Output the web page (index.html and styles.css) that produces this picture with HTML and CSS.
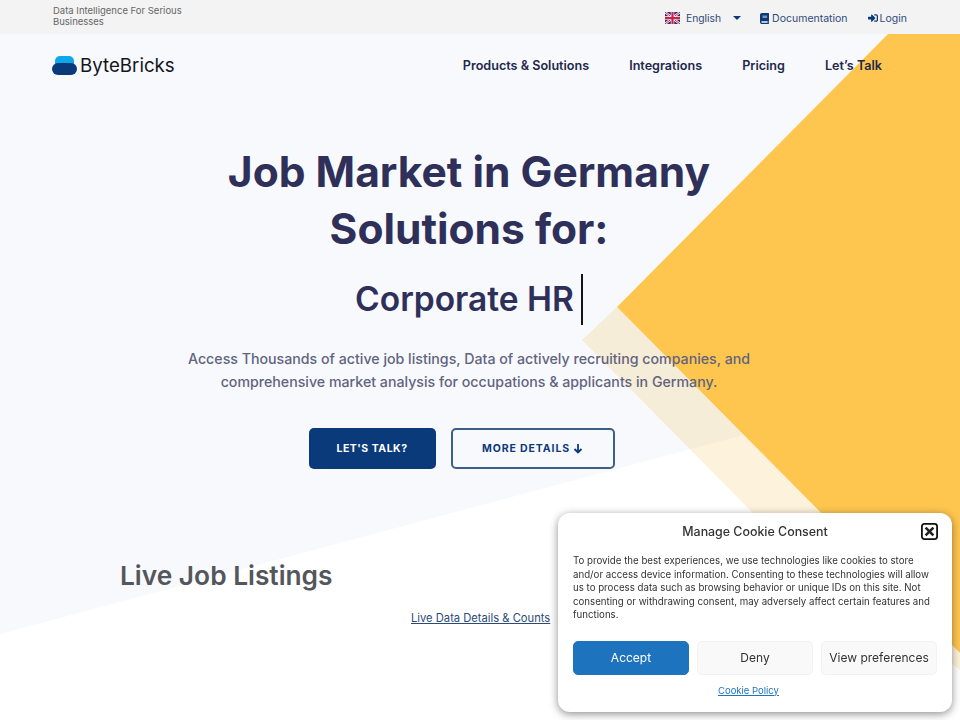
FILE: index.html
```html
<!DOCTYPE html>
<html lang="en">
<head>
  <meta charset="UTF-8" />
  <meta name="viewport" content="width=device-width, initial-scale=1.0"/>
  <title>ByteBricks</title>
  <link rel="stylesheet" href="styles.css">
</head>
<body>

  <!-- Top strip -->
  <div class="topbar">
    <div class="tagline">Data Intelligence For Serious Businesses</div>
    <div class="top-links">
      <a class="lang" href="#">
        <svg class="flag" viewBox="0 0 60 48" width="15" height="12" aria-hidden="true">
          <rect width="60" height="48" fill="#2a2d72"/>
          <path d="M0 0L60 48M60 0L0 48" stroke="#fff" stroke-width="9"/>
          <path d="M0 0L60 48M60 0L0 48" stroke="#c8234a" stroke-width="4"/>
          <path d="M30 0V48M0 24H60" stroke="#fff" stroke-width="14"/>
          <path d="M30 0V48M0 24H60" stroke="#c8234a" stroke-width="9"/>
        </svg>
        English
        <span class="caret"></span>
      </a>
      <a href="#">
        <svg viewBox="0 0 448 512" width="9" height="11" preserveAspectRatio="none" aria-hidden="true"><path fill="#0b3a7a" d="M448 360V24c0-13-11-24-24-24H96C43 0 0 43 0 96v320c0 53 43 96 96 96h328c13 0 24-11 24-24v-16c0-8-3-14-9-19-4-15-4-59 0-73 6-5 9-12 9-20zM128 134c0-3 3-6 6-6h212c3 0 6 3 6 6v20c0 3-3 6-6 6H134c-3 0-6-3-6-6v-20zm0 64c0-3 3-6 6-6h212c3 0 6 3 6 6v20c0 3-3 6-6 6H134c-3 0-6-3-6-6v-20zm253 250H96c-18 0-32-14-32-32 0-17 14-32 32-32h285c-2 17-2 47 0 64z"/></svg>
        Documentation
      </a>
      <a class="login" href="#">
        <svg viewBox="0 0 512 512" width="10" height="10" aria-hidden="true"><path fill="#0b3a7a" d="M416 448h-84c-7 0-12-5-12-12v-40c0-7 5-12 12-12h84c18 0 32-14 32-32V160c0-18-14-32-32-32h-84c-7 0-12-5-12-12V76c0-7 5-12 12-12h84c53 0 96 43 96 96v192c0 53-43 96-96 96zm-47-201L201 79c-15-15-41-5-41 17v96H24c-13 0-24 11-24 24v96c0 13 11 24 24 24h136v96c0 22 26 32 41 17l168-168c9-10 9-24 0-34z"/></svg>
        Login
      </a>
    </div>
  </div>

  <main class="page">
    <!-- Background shapes -->
    <svg class="bg-shapes" viewBox="0 0 960 686" preserveAspectRatio="none" aria-hidden="true">
      <polygon points="0,600 960,343 960,686 0,686" fill="#fff"/>
      <polygon points="617,273 582,306 752,478 960,636 960,619" fill="#f6c65a" fill-opacity="0.22"/>
      <polygon points="888,0 960,0 960,619 617,273" fill="#fec64f"/>
    </svg>

    <header class="nav">
      <a class="logo" href="#">
        <svg viewBox="0 0 25 19" width="25" height="19" aria-hidden="true">
          <rect x="3" y="0" width="19" height="12" rx="5" fill="#0fa6ea"/>
          <rect x="0" y="7" width="25" height="12" rx="6" fill="#0b3a7a"/>
        </svg>
        <span>ByteBricks</span>
      </a>
      <nav class="menu">
        <a href="#">Products &amp; Solutions</a>
        <a href="#">Integrations</a>
        <a href="#">Pricing</a>
        <a href="#">Let’s Talk</a>
      </nav>
    </header>

    <section class="hero">
      <h1>Job Market in Germany<br>Solutions for:</h1>
      <div class="typed"><span>Corporate HR</span><i class="cursor"></i></div>
      <p class="lead">Access Thousands of active job listings, Data of actively recruiting companies, and comprehensive market analysis for occupations &amp; applicants in Germany.</p>
      <div class="actions">
        <a class="btn btn-fill" href="#">LET'S TALK?</a>
        <a class="btn btn-line" href="#">MORE DETAILS
          <svg viewBox="0 0 10 11" width="10" height="11" aria-hidden="true"><path d="M5 1v8.5M1.5 6L5 9.5 8.5 6" fill="none" stroke="#0b3a7a" stroke-width="1.8"/></svg>
        </a>
      </div>
    </section>

    <section class="listings">
      <h2>Live Job Listings</h2>
      <a class="details-link" href="#">Live Data Details &amp; Counts</a>
    </section>
  </main>

  <!-- Cookie popup -->
  <div class="cookie" role="dialog" aria-labelledby="cookieTitle">
    <div class="cookie-head">
      <div id="cookieTitle" class="cookie-title">Manage Cookie Consent</div>
      <button class="cookie-close" type="button" aria-label="Close">
        <svg viewBox="0 0 17 17" width="17" height="17" aria-hidden="true">
          <rect x="0.9" y="0.9" width="15.2" height="15.2" rx="2.5" fill="#fff" stroke="#111" stroke-width="1.8"/>
          <path d="M4.6 4.6l7.8 7.8M12.4 4.6l-7.8 7.8" stroke="#222" stroke-width="2.6"/>
        </svg>
      </button>
    </div>
    <p class="cookie-text">To provide the best experiences, we use technologies like cookies to store and/or access device information. Consenting to these technologies will allow us to process data such as browsing behavior or unique IDs on this site. Not consenting or withdrawing consent, may adversely affect certain features and functions.</p>
    <div class="cookie-btns">
      <button class="accept" type="button">Accept</button>
      <button type="button">Deny</button>
      <button type="button">View preferences</button>
    </div>
    <a class="cookie-policy" href="#">Cookie Policy</a>
  </div>

</body>
</html>
```

FILE: styles.css
```css
/* Base & Layout */
html, body {
  height: 100%;
}
body {
  margin: 0;
  font-family: Inter, "Noto Sans", sans-serif;
  background-color: #fff;
  overflow: hidden;
}
a {
  text-decoration: none;
  color: inherit;
}

/* Top strip */
.topbar {
  height: 34px;
  box-sizing: border-box;
  padding: 0 53px;
  background: #f3f3f3;
  display: flex;
  align-items: center;
  justify-content: space-between;
}
.tagline {
  width: 135px;
  padding-bottom: 2px;
  font-size: 9.5px;
  line-height: 11px;
  color: #666;
}
.top-links {
  display: flex;
  align-items: center;
  gap: 20px;
  padding-top: 2px;
  font-size: 10.5px;
  color: #2f4a78;
}
.top-links a {
  display: flex;
  align-items: center;
  gap: 3px;
}
.top-links .lang {
  gap: 6px;
  margin-right: -1px;
  font-size: 10.3px;
}
.top-links .login {
  gap: 2px;
}
.caret {
  margin-left: 6px;
  border: 4px solid transparent;
  border-top-color: #0b3a7a;
  border-bottom: 0;
}

/* Page background */
.page {
  position: relative;
  height: 686px;
  background: #f7f9fd;
}
.bg-shapes {
  position: absolute;
  inset: 0;
  width: 100%;
  height: 100%;
}

/* Nav */
.nav {
  position: relative;
  display: flex;
  align-items: center;
  justify-content: space-between;
  height: 62px;
  padding: 0 78px 0 52px;
}
.logo {
  display: flex;
  align-items: center;
  gap: 3px;
  font-size: 18.7px;
  color: #14141c;
}
.menu {
  display: flex;
  gap: 40px;
  font-size: 12.6px;
  font-weight: 600;
  color: #22284a;
}

/* Hero */
.hero {
  position: relative;
  text-align: center;
  padding-right: 22px;
}
h1 {
  margin: 47px 0 0;
  font-size: 42.5px;
  line-height: 57px;
  font-weight: 700;
  color: #2f3059;
}
.typed {
  margin-top: 16px;
  height: 52px;
  display: flex;
  align-items: center;
  justify-content: center;
  gap: 7px;
  font-size: 33.5px;
  font-weight: 600;
  color: #2f3059;
}
.cursor {
  width: 2px;
  height: 51px;
  background: #14141c;
}
.lead {
  width: 580px;
  margin: 22px auto 0;
  font-size: 14.2px;
  line-height: 23px;
  font-weight: 500;
  color: #62647f;
}
.actions {
  margin-top: 35px;
  padding-right: 15px;
  display: flex;
  justify-content: center;
  gap: 15px;
}
.btn {
  box-sizing: border-box;
  height: 41px;
  border-radius: 5px;
  display: flex;
  align-items: center;
  justify-content: center;
  gap: 3px;
  font-size: 10.5px;
  font-weight: 700;
  letter-spacing: 0.9px;
}
.btn-fill {
  width: 127px;
  background: #0b3a7a;
  color: #fff;
  letter-spacing: 0.5px;
}
.btn-line {
  width: 164px;
  border: 2px solid #3c5f88;
  color: #0b3a7a;
}

/* Listings */
.listings {
  position: relative;
  padding-left: 120px;
}
h2 {
  margin: 89px 0 0;
  font-size: 26.3px;
  line-height: 36px;
  font-weight: 600;
  color: #54565b;
}
.details-link {
  display: block;
  width: 139px;
  margin: 16px 0 0 291px;
  font-size: 11.2px;
  line-height: 16px;
  color: #2c4a78;
  text-decoration: underline;
  white-space: nowrap;
}

/* Cookie popup */
.cookie {
  position: fixed;
  left: 558px;
  top: 513px;
  width: 394px;
  height: 199px;
  box-sizing: border-box;
  padding: 0 15px;
  background: #fff;
  border-radius: 12px;
  box-shadow: 0 2px 8px rgba(0,0,0,0.45);
  color: #333;
}
.cookie-head {
  position: relative;
  height: 37px;
  display: flex;
  align-items: center;
  justify-content: center;
}
.cookie-title {
  font-size: 12.4px;
  font-weight: 500;
}
.cookie-close {
  position: absolute;
  right: -1px;
  top: 10px;
  width: 17px;
  height: 17px;
  padding: 0;
  border: 0;
  background: none;
}
.cookie-text {
  margin: 4px 0 0;
  font-size: 9.7px;
  line-height: 13.5px;
}
.cookie-btns {
  margin-top: 19px;
  display: grid;
  grid-template-columns: repeat(3, 1fr);
  gap: 8px;
}
.cookie-btns button {
  height: 34px;
  padding: 0;
  border: 1px solid #f2f2f2;
  border-radius: 5px;
  background: #f9f9f9;
  font-family: inherit;
  font-size: 12px;
  color: #333;
}
.cookie-btns .accept {
  background: #1e73be;
  border-color: #1e73be;
  color: #fff;
}
.cookie-policy {
  display: block;
  margin: 10px 0 0 145px;
  font-size: 9.5px;
  color: #1e73be;
  text-decoration: underline;
}
```
